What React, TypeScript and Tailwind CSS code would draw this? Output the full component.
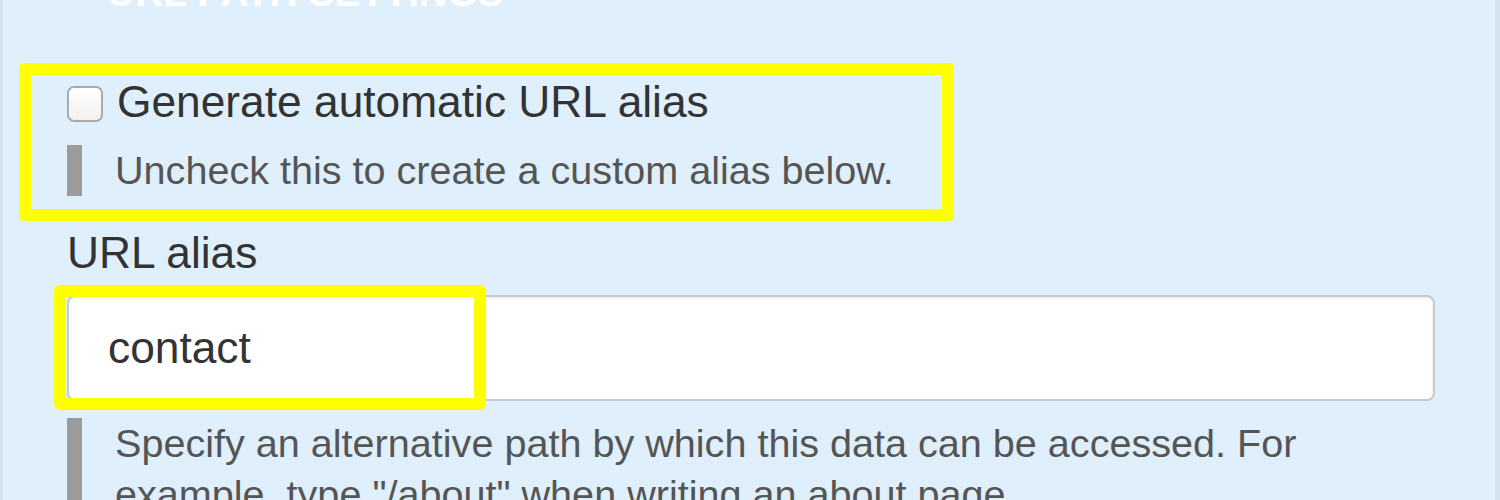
import { useState } from "react";

export default function App() {
  const [auto, setAuto] = useState(false);
  const [alias, setAlias] = useState("contact");

  return (
    <div className="w-[1500px] h-[500px] overflow-hidden bg-[#dfeffc] border-l-[3px] border-r-[5px] border-[#d3e3f0] font-['Liberation_Sans',Arial,sans-serif]">
      {/* fieldset legend, cut off at the top */}
      <div className="h-[12px] overflow-hidden flex items-end pl-[104px]">
        <span className="text-[39px] font-bold leading-none text-white uppercase">
          URL path settings
        </span>
      </div>

      {/* highlighted checkbox field */}
      <div className="mt-[51px] ml-[16px] w-[935px] border-[12px] border-[#ffff00] rounded-[5px] pl-[36px] pb-[13px]">
        <label className="flex items-start gap-[14px] text-[44.3px] leading-[53px] text-[#333]">
          <input
            type="checkbox"
            checked={auto}
            onChange={(e) => setAuto(e.target.checked)}
            className="appearance-none mt-[11px] w-[36px] h-[36px] shrink-0 rounded-[7px] border-2 border-[#ababab] bg-gradient-to-b from-white to-[#f1f1f1] checked:bg-[#4a90d9]"
          />
          Generate automatic URL alias
        </label>
        <div className="mt-[17px] border-l-[15px] border-[#9b9b9b] pl-[33px] text-[39.6px] leading-[51px] text-[#555]">
          Uncheck this to create a custom alias below.
        </div>
      </div>

      <div className="mt-[5px] ml-[64px] text-[44.3px] leading-[53px] text-[#333]">
        URL alias
      </div>

      <div className="relative mt-[16px] ml-[64px] w-[1368px] h-[106px]">
        <input
          type="text"
          value={alias}
          onChange={(e) => setAlias(e.target.value)}
          className="w-full h-full bg-white border-2 border-[#c9c9c9] rounded-[8px] pl-[39px] text-[44.3px] text-[#333] shadow-[inset_0_2px_3px_rgba(0,0,0,0.07)] outline-none"
        />
        <div className="absolute -left-[13px] -top-[10px] w-[432px] h-[125px] border-[12px] border-[#ffff00] rounded-[6px] pointer-events-none" />
      </div>

      <div className="mt-[17px] ml-[64px] w-[1368px] border-l-[15px] border-[#9b9b9b] pl-[33px] text-[39.6px] leading-[51px] text-[#555]">
        Specify an alternative path by which this data can be accessed. For
        example, type "/about" when writing an about page.
      </div>
    </div>
  );
}
